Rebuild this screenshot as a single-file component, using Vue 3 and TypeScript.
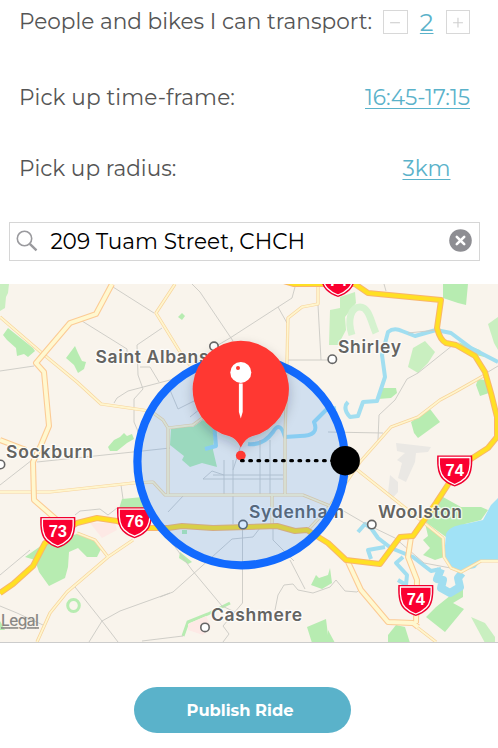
<script setup lang="ts">
import { ref } from 'vue'

interface Place { name: string; x: number; y: number; width: number; dotX: number; dotY: number }
interface Shield { label: string; x: number; y: number }

const seats = ref(2)
const address = ref('209 Tuam Street, CHCH')

const places: Place[] = [
  { name: 'Saint Albans', x: 95.5, y: 363, width: 113, dotX: 214, dotY: 346.3 },
  { name: 'Shirley', x: 338, y: 352.7, width: 63, dotX: 332.3, dotY: 359.2 },
  { name: 'Sockburn', x: 6, y: 457.6, width: 87, dotX: 0.5, dotY: 464.5 },
  { name: 'Sydenham', x: 249, y: 517.7, width: 95, dotX: 243, dotY: 524.6 },
  { name: 'Woolston', x: 378, y: 518, width: 84, dotX: 371.8, dotY: 524.6 },
  { name: 'Cashmere', x: 211, y: 620.8, width: 91, dotX: 205, dotY: 627.4 },
]

const shields: Shield[] = [
  { label: '73', x: 57.8, y: 517 },
  { label: '76', x: 134.6, y: 507.2 },
  { label: '74', x: 338, y: 266 },
  { label: '74', x: 454.7, y: 455.5 },
  { label: '74', x: 415.8, y: 585 },
]

const parks: string[] = [
  '3,335 8,328 33,348 35,351 28,357 24,354 17,356 16,348 7,340',
  '75,346 78,353 82,361 86,362 84,369 78,373 74,365 66,358',
  '108,447 114,440 120,437 124,433 127,436 132,434 134,439 127,443 117,451 110,451',
  '182,313 185,316 182,320 178,317',
  '171,429 180,427 193,427 203,420 215,428 213,450 217,467 202,463 190,467 182,460 184,456 170,445',
  '443,284 468,284 466,305 458,303 443,298',
  '383,388 396,388 397,393 391,398 378,399',
  '411,422 430,409 440,422 418,438 414,433',
  '478,379 485,380 489,393 480,396 476,385',
  '458,342 480,350 485,357 470,354',
  '443,497 461,507 481,507 488,510 481,520 465,524 446,537 424,521',
  '425,523 443,538 444,557 435,560 423,555 430,548 423,540 428,536',
  '463,587 463,597 453,603 464,609 445,632 426,617 436,607 451,595',
  '388,635 396,625 405,627 410,643 388,643',
  '328,630 335,643 328,643',
  '316,575 319,578 328,575 330,568 332,583 322,589 311,585',
  '307,627 326,619 329,643 312,643',
  '180,552 192,562 188,564 179,558',
  '182,530 187,530 187,534 182,534',
  '25,557 45,543 77,534 93,540 101,549 97,557 87,557 78,548 69,552 68,567 65,578 49,586 39,572 35,560',
  '122,499 143,497 148,510 118,512',
  '0,621 5,630 0,630',
]
const lightParks: string[] = [
  '0,284 9,284 8,293 6,297 5,308 0,311',
  '340,297 355,292 356,303 345,317 346,330 338,345 329,345 330,310 340,308',
  '498,317 488,324 494,343 498,350',
  '425,341 435,352 428,363 418,373 408,367 413,348',
  '471,617 485,623 495,637 495,643 485,643',
]
const lanes = [
  'M113 287L154 313M82 321L127 349L127 356M162 328L137 345L138 375L143 389L134 399L134 422L140 436M140 367L150 367L159 382M114 403L117 398L128 391L170 380L205 366M0 371L34 366M37 462L133 452L170 448M0 485L32 460',
  'M192 284L200 292L233 341M295 287L292 298L278 307L230 338L218 345M278 307L287 323M318 305L321 360M288 360L330 360M170 390L178 409L200 398M205 405L190 417',
  'M384 284L386 291M453 345L418 373L407 379L395 400L379 415L378 440M328 432L383 433M483 375L498 366M382 348L382 352M408 333L437 330',
  'M170 540L192 570L222 606L235 612M160 597L173 592L192 575L232 539L253 537L260 528M233 460L233 524M242.500 528L242.500 603L228 620L223 626L229 634L223 642M290 560L305 589M273 515L273 540L294 561M275 610L278 595L284 585L293 584L298 590L313 593L330 587L336 580L345 591L357 592L361 588',
  'M224 460L224 494M260 440L260 495M270 440L270 495M203 479L283 479M213 475L283 475M203 479L212 471L224 475M168 512L184 495M241 445L233 470',
  'M75 587L102 621L118 642M89 642L102 621L120 611L170 593M0 575L30 550M0 606L17 613L43 625M75 515L80 511L100 509L108 515L117 508M121 485L123 499M142 641L183 636M330 503L366 524L395 538L424 563L456 569',
]
</script>

<template>
  <main class="screen">
    <section class="options">
      <div class="row seats">
        <span class="label people">People and bikes I can transport:</span>
        <div class="stepper">
          <button class="step" aria-label="Fewer" @click="seats--">
            <svg viewBox="0 0 24 24"><path d="M6.500 12.500H17" /></svg>
          </button>
          <a class="link count">{{ seats }}</a>
          <button class="step" aria-label="More" @click="seats++">
            <svg viewBox="0 0 24 24"><path d="M6.500 12.500H17M11.700 7.300V17.700" /></svg>
          </button>
        </div>
      </div>
      <div class="row time">
        <span class="label frame">Pick up time-frame:</span>
        <a class="link hours">16:45-17:15</a>
      </div>
      <div class="row radius">
        <span class="label">Pick up radius:</span>
        <a class="link distance">3km</a>
      </div>
    </section>

    <div class="search">
      <svg class="glass" viewBox="0 0 22 22"><circle cx="8.500" cy="8.500" r="7.200" /><path d="M13.800 13.800L20.500 20.300" class="handle" /></svg>
      <span class="address">{{ address }}</span>
      <svg class="clear" viewBox="0 0 23 23"><circle cx="11.500" cy="11.500" r="11.300" /><path d="M7.800 7.800L15.200 15.200M15.200 7.800L7.800 15.200" /></svg>
    </div>

    <svg class="map" viewBox="0 284 498 358" width="498" height="358">
      <defs>
        <filter id="shade" x="-30%" y="-30%" width="160%" height="170%">
          <feDropShadow dx="0" dy="5" stdDeviation="6" flood-color="#123" flood-opacity=".24" />
        </filter>
      </defs>
      <rect x="0" y="284" width="498" height="358" fill="#f9f4ec" />
      <polygon v-for="p in parks" :key="p" :points="p" fill="#b7ecb1" />
      <polygon v-for="p in lightParks" :key="p" :points="p" fill="#c9efc0" />
      <path class="arc" d="M352 335C347 320 351 307 360 307C369 307 371 322 376 333" />
      <ellipse class="ring" cx="73.500" cy="605.500" rx="5.800" ry="6" />
      <path class="strip" d="M183 636L188 622L208 614L230 603" />
      <g fill="#fde9e5">
        <polygon points="188,624 206,616 211,627 203,635 188,630" />
        <polygon points="90,523 115,523 117,530 102,538" />
      </g>
      <g fill="#eae8e4">
        <polygon points="396,443 431,447 428,452 416,453 415,462 406,482 398,478 402,463 397,460 405,453 397,451" />
        <polygon points="390,475 398,482 398,492 391,500 388,493" />
      </g>

      <path class="lake" d="M498 498L491 505L483 520L465 524Q449 526 446 534L444 557Q448 567 461 571L475 568L482 560L498 560Z" />
      <g class="river">
        <path d="M348 402Q342 408 350 417L358 416L363 402L377 401L385 377L382 355L388 332Q394 327 402 331L415 336L436 330L451 333L471 348L498 362" />
        <path d="M248 444Q263 446 273 432Q280 420 285 437L300 436Q320 436 314 422L326 410L336 408" />
        <path d="M214 423L216 446L205 449" />
        <path d="M358 532L365 524L371 528L378 538L391 548L413 557L431 571L441 569" />
        <path d="M385 547L368 550L371 559M403 557L396 563L407 575L406 585L398 580" />
        <path class="inlet" d="M441 569L437 579L443 580L441 588L450 593L460 587L458 578L462 573" />
      </g>

      <path v-for="l in lanes" :key="l" class="lane" :d="l" />

      <g class="road thin">
        <path v-for="pass in ['edge', 'core']" :key="pass" :class="pass" d="M0 317L43 354L77 382L101 404L143 410L152 412L163 420L168 428V495M168 428L193 425L205 416M175 284L156 313L180 352L190 365M318 284V304L302 307L288 318L287 360L285 437V495M0 492H50L133 483L153 482L165 495H303L330 506M272 495V526M308 530L330 506L360 462L391 427L418 417L440 400L455 392L485 375M355 468L423 522L443 538L444 557L451 568L461 572L481 561H498M133 540L108 557L67 592L50 613L37 642M77 533L95 540L108 557M418 628L436 642" />
      </g>
      <g class="road wide">
        <path v-for="pass in ['edge', 'core']" :key="pass" :class="pass" d="M112 284L96 314L70 323L36 363L44 372L49 426L41 445L33 462L34 500L57 520M348 562L361 590L388 622L413 623L418 627M411 537L408 557L417 580L416 623M0 440L26 450" />
      </g>
      <g class="road trunk">
        <path v-for="pass in ['edge', 'core']" :key="pass" :class="pass" d="M280 280L294 284H325L355 284L368 293L441 300L437 328Q440 340 446 343L456 345L475 356L485 372L491 393L497 417V437L488 448L460 466L451 480L436 503L413 536L400 537L380 564L346 560L328 543L307 530L295 531L277 526L213 528L182 526L168 528L143 528L117 521L97 518L77 523L45 543L33 566L13 584L0 593" />
      </g>

      <g v-for="s in shields" :key="`${s.x}-${s.y}`" :transform="`translate(${s.x} ${s.y})`">
        <path d="M-17.500 0H17.500Q18.500 18 12 24Q7 29 0 31Q-7 29 -12 24Q-18.500 18 -17.500 0Z" fill="#f0002f" />
        <path d="M-15.400 2H15.400Q16.200 17 10.500 22.500Q6 27 0 29Q-6 27 -10.500 22.500Q-16.200 17 -15.400 2Z" fill="#fa0030" stroke="#fff" stroke-width="1.300" />
        <text class="number" y="20" text-anchor="middle">{{ s.label }}</text>
      </g>

      <g v-for="p in places" :key="p.name">
        <circle class="town" :cx="p.dotX" :cy="p.dotY" r="4.200" />
        <text class="place" :x="p.x" :y="p.y" :textLength="p.width">{{ p.name }}</text>
      </g>
      <text class="legal" x="1" y="626.200" textLength="38">Legal</text>

      <circle cx="241" cy="461.500" r="104" fill="#147fff" fill-opacity=".17" />
      <circle cx="241.200" cy="461.500" r="103.800" fill="none" stroke="#126afe" stroke-width="8.200" />

      <g filter="url(#shade)">
        <path d="M240.800 340.700A48.500 48.500 0 0 1 252 436.300Q245 438.500 240.800 447.500Q236.600 438.500 229.600 436.300A48.500 48.500 0 0 1 240.800 340.700Z" fill="#ff3933" />
      </g>
      <circle cx="240.800" cy="372.400" r="10.500" fill="#fff" />
      <circle cx="238" cy="368" r="2" fill="#ff3933" />
      <path d="M238.900 383.500H242.700V412L240.800 418.500L238.900 412Z" fill="#fff" />
      <circle cx="240.800" cy="455.600" r="4.900" fill="#ff3933" />
      <path d="M241.600 460.700H334" stroke="#000" stroke-width="3.300" stroke-linecap="round" stroke-dasharray="1.600 6.600" />
      <circle cx="345.200" cy="460.700" r="14.700" fill="#000" />
    </svg>

    <footer class="actions">
      <button class="publish">Publish Ride</button>
    </footer>
  </main>
</template>

<style>
body { margin: 0; background: #fff; }
</style>

<style scoped>
.screen {
  width: 498px;
  height: 748px;
  overflow: hidden;
  display: flex;
  flex-direction: column;
  box-sizing: border-box;
  background: #fff;
  font-family: Montserrat, Inter, "Liberation Sans", sans-serif;
}
.options { height: 222px; flex: none; padding: 0 28px 0 19px; box-sizing: border-box; }
.row { display: flex; align-items: center; justify-content: space-between; }
.seats { height: 43px; }
.time { height: 108px; }
.radius { height: 34px; padding-right: 19.5px; }
.label { color: #555; font-size: 21.6px; font-weight: 400; white-space: nowrap; }
.people { padding-bottom: 2px; }
.frame { letter-spacing: .1px; }
.link { color: #5ab2ca; font-size: 21.7px; font-weight: 400; text-decoration: underline; text-decoration-thickness: 1.2px; text-underline-offset: 3px; white-space: nowrap; }
.stepper { display: flex; align-items: center; gap: 12px; padding-top: 1px; }
.step { width: 24.500px; height: 24.500px; padding: 0; display: flex; border: 1.5px solid #d8d8d8; background: #fff; box-sizing: border-box; }
.step svg { width: 100%; height: 100%; fill: none; stroke: #cfcfcf; stroke-width: 1.2; }
.link.count { font-size: 24px; text-underline-offset: 2px; }
.search { flex: none; width: 471px; height: 39px; margin-left: 9.4px; box-sizing: border-box; border: 1.3px solid #d6d6d6; display: flex; align-items: center; padding: 0 7px 2px 6px; }
.glass { width: 22px; height: 22px; fill: none; stroke: #9a9a9e; stroke-width: 1.6; }
.handle { stroke-width: 2.4; }
.address { flex: 1; margin-left: 12px; font-size: 21.6px; font-weight: 400; color: #000; white-space: nowrap; }
.clear { width: 23px; height: 23px; fill: #8e8e93; }
.clear path { stroke: #fff; stroke-width: 2.6; stroke-linecap: round; }
.map { display: block; flex: none; margin-top: 23px; border-bottom: 1px solid #ccc; }
.arc { fill: none; stroke: #d5f2cf; stroke-width: 7; }
.ring { fill: none; stroke: #b7ecb1; stroke-width: 3; }
.strip { fill: none; stroke: #b7ecb1; stroke-width: 3; }
.lake { fill: #a1e2f6; }
.river { fill: none; stroke: #a1def0; stroke-width: 4; stroke-linejoin: round; }
.river .inlet { stroke-width: 8; }
.lane { fill: none; stroke: #cbc9c4; stroke-width: .9; }
.road { fill: none; stroke-linejoin: round; }
.thin .edge { stroke: #f7d49d; stroke-width: 3.2; }
.thin .core { stroke: #fff5cd; stroke-width: 1.8; }
.wide .edge { stroke: #fccb95; stroke-width: 6; }
.wide .core { stroke: #fff8d0; stroke-width: 3.8; }
.trunk .edge { stroke: #f9b66b; stroke-width: 6; }
.trunk .core { stroke: #ffe024; stroke-width: 4; }
.number { fill: #fff; font: 700 16.5px "Liberation Sans", sans-serif; }
.town { fill: #fff; stroke: #666; stroke-width: 1.6; }
.place { font: 600 17.5px Inter, sans-serif; fill: #646462; stroke: #fff; stroke-width: 2.5; stroke-opacity: .8; paint-order: stroke; stroke-linejoin: round; }
.legal { font: 500 15.5px Inter, sans-serif; fill: #898784; text-decoration: underline; text-decoration-thickness: 1.5px; }
.actions { display: flex; justify-content: center; padding: 44px 13px 0 0; }
.publish { width: 217.500px; height: 46px; border: 0; border-radius: 23px; padding: 0 5px 0 0; background: #5ab2ca; color: #fff; font: 700 16.3px Montserrat, Inter, sans-serif; }
</style>
